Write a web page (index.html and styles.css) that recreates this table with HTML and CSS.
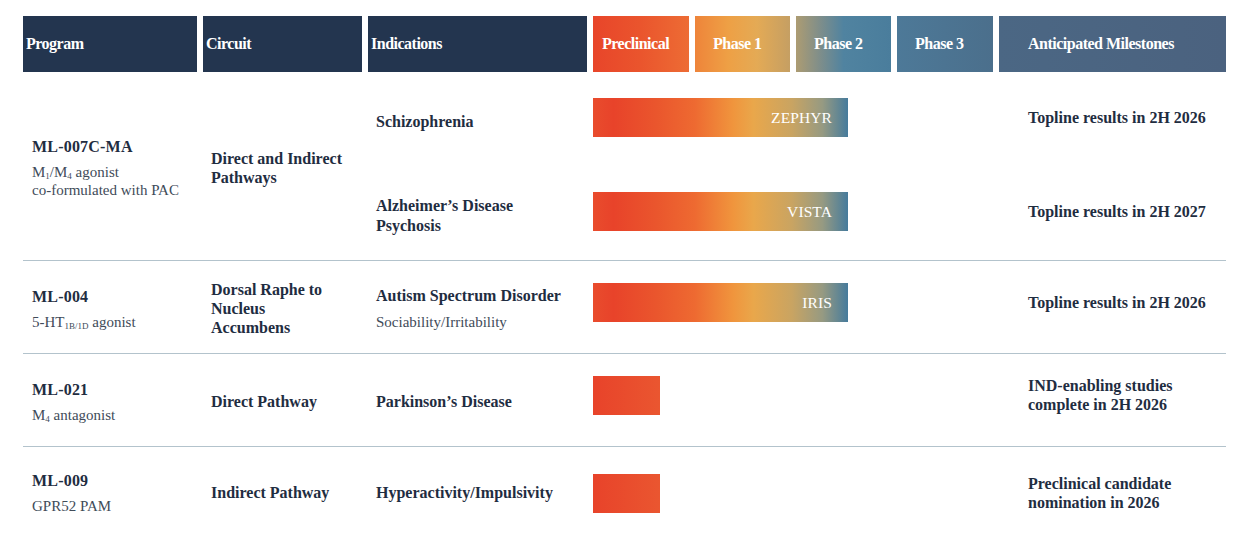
FILE: index.html
```html
<!DOCTYPE html>
<html>
<head>
<meta charset="utf-8">
<link rel="stylesheet" href="styles.css">
</head>
<body>
<div class="pipeline">
  <div class="head">
    <div class="hcell navy">Program</div>
    <div class="hcell navy">Circuit</div>
    <div class="hcell navy">Indications</div>
    <div class="hcell phase pre">Preclinical</div>
    <div class="hcell phase p1">Phase 1</div>
    <div class="hcell phase p2">Phase 2</div>
    <div class="hcell phase p3">Phase 3</div>
    <div class="hcell ms">Anticipated Milestones</div>
  </div>

  <div class="group double">
    <div class="prog span2">
      <div class="name">ML-007C-MA</div>
      <div class="sub">M<sub>1</sub>/M<sub>4</sub> agonist<br>co-formulated with PAC</div>
    </div>
    <div class="circ span2">Direct and Indirect<br>Pathways</div>
    <div class="ind r1">Schizophrenia</div>
    <div class="barcell r1"><div class="bar long" style="width:255px"><span>ZEPHYR</span></div></div>
    <div class="mile r1">Topline results in 2H 2026</div>
    <div class="ind r2">Alzheimer’s Disease<br>Psychosis</div>
    <div class="barcell r2"><div class="bar long" style="width:255px"><span>VISTA</span></div></div>
    <div class="mile r2">Topline results in 2H 2027</div>
  </div>

  <div class="group">
    <div class="prog">
      <div class="name">ML-004</div>
      <div class="sub">5-HT<sub>1B/1D</sub> agonist</div>
    </div>
    <div class="circ">Dorsal Raphe to<br>Nucleus<br>Accumbens</div>
    <div class="ind">Autism Spectrum Disorder<div class="isub">Sociability/Irritability</div></div>
    <div class="barcell"><div class="bar long" style="width:255px"><span>IRIS</span></div></div>
    <div class="mile">Topline results in 2H 2026</div>
  </div>

  <div class="group">
    <div class="prog">
      <div class="name">ML-021</div>
      <div class="sub">M<sub>4</sub> antagonist</div>
    </div>
    <div class="circ">Direct Pathway</div>
    <div class="ind">Parkinson’s Disease</div>
    <div class="barcell"><div class="bar short" style="width:67px"></div></div>
    <div class="mile">IND-enabling studies<br>complete in 2H 2026</div>
  </div>

  <div class="group last">
    <div class="prog">
      <div class="name">ML-009</div>
      <div class="sub">GPR52 PAM</div>
    </div>
    <div class="circ">Indirect Pathway</div>
    <div class="ind">Hyperactivity/Impulsivity</div>
    <div class="barcell"><div class="bar short" style="width:67px"></div></div>
    <div class="mile">Preclinical candidate<br>nomination in 2026</div>
  </div>
</div>
</body>
</html>
```

FILE: styles.css
```css
* { box-sizing: border-box; }
html, body { margin: 0; padding: 0; background: #ffffff; }
body {
  font-family: "Liberation Serif", "Times New Roman", serif;
  color: #1f2d41;
  width: 1242px;
  height: 542px;
  overflow: hidden;
}
.pipeline {
  padding: 16px 16px 0 23px;
}
.head, .group {
  display: grid;
  grid-template-columns: 174px 159px 219px 96px 95px 95px 96px 227px;
  column-gap: 6px;
}
.head { height: 56px; }
.hcell {
  display: flex;
  align-items: center;
  color: #ffffff;
  font-weight: bold;
  font-size: 16px;
  letter-spacing: -0.5px;
  padding-left: 3px;
}
.navy { background: #23354f; }
.phase { padding-left: 18px; }
.pre { padding-left: 9px; background: linear-gradient(90deg, #e8452a 0%, #ea552d 50%, #ed6c34 100%); }
.p1 { background: linear-gradient(90deg, #ee843a 0%, #eea045 35%, #e4aa55 65%, #c59f63 100%); }
.p2 { background: linear-gradient(90deg, #ad9c72 0%, #7f8e8a 25%, #5083a0 50%, #4a7d9c 100%); }
.p3 { background: linear-gradient(90deg, #4d7998 0%, #4b6f8c 100%); }
.ms { background: linear-gradient(90deg, #4b6784 0%, #4b627f 100%); padding-left: 29px; }

.group {
  grid-template-rows: 92px;
  border-bottom: 1px solid #b3c3cc;
  align-items: center;
}
.group.double { grid-template-rows: 94px 94px; }
.group.last { border-bottom: none; grid-template-rows: 88px; }
.span2 { grid-row: 1 / span 2; }
.r1 { grid-row: 1; }
.r2 { grid-row: 2; }

.prog { grid-column: 1; padding-left: 9px; padding-top: 3px; }
.name { font-weight: bold; font-size: 16px; line-height: 20px; letter-spacing: 0.2px; }
.sub {
  font-size: 15px;
  line-height: 18px;
  color: #414b59;
  margin-top: 6px;
}
.sub sub { font-size: 9px; vertical-align: -2px; line-height: 0; }
.circ {
  grid-column: 2;
  padding-left: 8px;
  padding-top: 3px;
  font-weight: bold;
  font-size: 16px;
  line-height: 19px;
}
.ind {
  grid-column: 3;
  padding-left: 8px;
  padding-top: 3px;
  font-weight: bold;
  font-size: 16px;
  line-height: 20px;
}
.double .ind { padding-top: 6px; }
.isub {
  font-weight: normal;
  font-size: 15px;
  color: #414b59;
  margin-top: 7px;
  line-height: 18px;
}
.barcell {
  grid-column: 4 / span 4;
  padding-bottom: 9px;
}
.double .barcell { padding-bottom: 3px; }
.last .barcell { padding-bottom: 0; padding-top: 5px; }
.bar {
  height: 39px;
  display: flex;
  align-items: center;
  justify-content: flex-end;
}
.bar span {
  color: #ffffff;
  font-size: 15.5px;
  padding-right: 16px;
  letter-spacing: 0.1px;
}
.bar.long {
  background: linear-gradient(90deg, #e94c2d 0%, #e8432a 8%, #ea562d 25%, #ee6a31 40%, #f0953d 55%, #e9a74b 63%, #c9a462 78%, #969a82 90%, #467b9c 100%);
}
.bar.short {
  background: linear-gradient(90deg, #e8432a 0%, #ea5630 100%);
}
.mile {
  grid-column: 8;
  padding-left: 29px;
  padding-bottom: 10px;
  font-weight: bold;
  font-size: 16px;
  line-height: 19px;
}
.double .mile { padding-bottom: 4px; }
.last .mile { padding-bottom: 0; padding-top: 3px; }
```
